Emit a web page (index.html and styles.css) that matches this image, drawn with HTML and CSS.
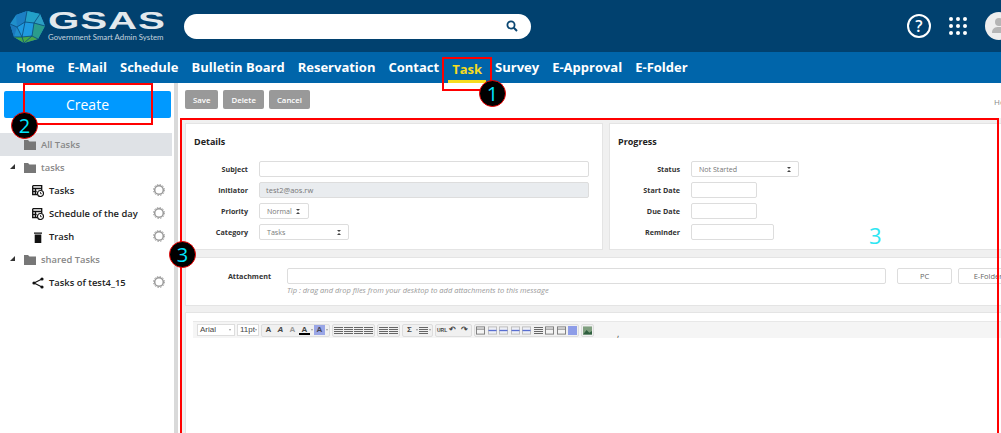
FILE: index.html
```html
<!DOCTYPE html>
<html lang="en">
<head>
    <meta charset="UTF-8">
    <meta name="viewport" content="width=device-width, initial-scale=1.0">
    <title>GSAS Task</title>
    <link rel="stylesheet" href="styles.css">
</head>
<body>
    <svg class="defs" width="0" height="0">
        <symbol id="folder" viewBox="0 0 12 11"><path d="M0 1h4l1.500 1.500H12V11H0z" fill="#777"/></symbol>
        <symbol id="gear" viewBox="0 0 12 12"><circle cx="6" cy="6" r="4.300" fill="none" stroke="#999" stroke-width="1.500"/><circle cx="6" cy="6" r="5.500" fill="none" stroke="#999" stroke-width="1" stroke-dasharray="1.400 1.480"/></symbol>
        <symbol id="calendar" viewBox="0 0 12 12"><path d="M.7.7h9v5M5 9.500H.7V.7M.7 3.500h9M3.500 3.500v6M.7 6.500h4" fill="none" stroke="#111" stroke-width="1.300"/><circle cx="8.500" cy="8.500" r="3" fill="#fff" stroke="#111" stroke-width="1.100"/><path d="M8.500 7v1.700h1.300" fill="none" stroke="#111" stroke-width=".8"/></symbol>
        <symbol id="align" viewBox="0 0 9 9"><path d="M0 1.500h9M0 3.500h9M0 5.500h9M0 7.500h9" stroke="#666" stroke-width="1"/></symbol>
        <symbol id="grid" viewBox="0 0 10 9"><rect x=".5" y=".5" width="9" height="8" fill="#f4f4f4" stroke="#777"/><path d="M.5 3h9" stroke="#777"/></symbol>
        <symbol id="blueline" viewBox="0 0 10 9"><rect x=".5" y=".5" width="9" height="8" fill="#eef0f6" stroke="#bbb"/><path d="M.5 4.500h9" stroke="#5a6fd0" stroke-width="1.500"/></symbol>
    </svg>

    <header class="topbar">
        <div class="logo">
            <svg class="logo-mark" width="35" height="34" viewBox="0 0 35 34">
                <path d="M17 1l13 3 5 12-7 13-14 4L4 27 0 14 6 5z" fill="#1f8fcb"/>
                <path d="M17 1l13 3-6 9-9-1z" fill="#22a0c8"/>
                <path d="M6 5l11-4-2 11-8 5z" fill="#1c7fc4"/>
                <path d="M30 4l5 12-11-3z" fill="#2c9fc4"/>
                <path d="M7 17l8-5 9 1-2 13-10 1z" fill="#1f9ae0"/>
                <path d="M4 27l8 0 2 6zM12 27l10-1-8 7z" fill="#45a84a"/>
                <path d="M22 26l6 3-14 4z" fill="#4aa64c"/>
                <path d="M24 13l11 3-7 13-6-3z" fill="#2a9c8c"/>
                <path d="M0 14l7 3-3 10z" fill="#1c78bc"/>
                <path d="M15 12l2-11M15 12l9 1 6-9M24 13l11 3M24 13l-2 13 6 3M22 26l-10 1 3-15-8 5-7-3M7 17l5 10-8 0M12 27l2 6M22 26l-8 7" fill="none" stroke="#0b4a78" stroke-width=".8"/>
            </svg>
            <div class="logo-text">
                <div class="logo-name">GSAS</div>
                <div class="logo-sub">Government Smart Admin System</div>
            </div>
        </div>
        <div class="search">
            <svg width="12" height="12" viewBox="0 0 12 12"><circle cx="5" cy="5" r="3.600" fill="none" stroke="#0a4672" stroke-width="1.800"/><path d="M7.800 7.800L11 11" stroke="#0a4672" stroke-width="2"/></svg>
        </div>
        <div class="top-icons">
            <div class="help">?</div>
            <svg class="apps" width="18" height="18" viewBox="0 0 18 18" fill="#fff">
                <circle cx="2" cy="2" r="2"/><circle cx="9" cy="2" r="2"/><circle cx="16" cy="2" r="2"/>
                <circle cx="2" cy="9" r="2"/><circle cx="9" cy="9" r="2"/><circle cx="16" cy="9" r="2"/>
                <circle cx="2" cy="16" r="2"/><circle cx="9" cy="16" r="2"/><circle cx="16" cy="16" r="2"/>
            </svg>
            <div class="avatar">
                <svg width="28" height="28" viewBox="0 0 28 28" fill="#b5b5b5"><circle cx="14" cy="10" r="4"/><path d="M7 21c0-5 3-6 7-6s7 1 7 6z"/></svg>
            </div>
        </div>
    </header>

    <nav class="menu">
        <a>Home</a>
        <a>E-Mail</a>
        <a>Schedule</a>
        <a>Bulletin Board</a>
        <a>Reservation</a>
        <a>Contact</a>
        <a class="active">Task</a>
        <a>Survey</a>
        <a>E-Approval</a>
        <a>E-Folder</a>
    </nav>

    <div class="page">
        <aside class="sidebar">
            <button class="create">Create</button>
            <ul class="tree">
                <li class="row selected group-row"><svg class="folder"><use href="#folder"/></svg>All Tasks</li>
                <li class="row group-row"><span class="caret"></span><svg class="folder"><use href="#folder"/></svg>tasks</li>
                <li class="row item"><svg class="item-icon"><use href="#calendar"/></svg>Tasks<svg class="gear"><use href="#gear"/></svg></li>
                <li class="row item"><svg class="item-icon"><use href="#calendar"/></svg>Schedule of the day<svg class="gear"><use href="#gear"/></svg></li>
                <li class="row item">
                    <svg class="item-icon" viewBox="0 0 12 12"><path d="M2 1.500h8v1.300H2zM2.700 3.500h6.600V12H2.700z" fill="#111"/></svg>Trash<svg class="gear"><use href="#gear"/></svg>
                </li>
                <li class="row group-row"><span class="caret"></span><svg class="folder"><use href="#folder"/></svg>shared Tasks</li>
                <li class="row item">
                    <svg class="item-icon" viewBox="0 0 12 12"><path d="M10 2L2 6l8 4" fill="none" stroke="#111" stroke-width="1.100"/><circle cx="10" cy="2" r="1.600" fill="#111"/><circle cx="2" cy="6" r="1.600" fill="#111"/><circle cx="10" cy="10" r="1.600" fill="#111"/></svg>Tasks of test4_15<svg class="gear"><use href="#gear"/></svg>
                </li>
            </ul>
        </aside>
        <div class="divider"></div>

        <main class="content">
            <div class="actions">
                <button class="act">Save</button>
                <button class="act">Delete</button>
                <button class="act">Cancel</button>
                <span class="crumb">Ho</span>
            </div>

            <div class="panels">
                <div class="cards">
                    <section class="card details">
                        <h3>Details</h3>
                        <div class="form">
                            <label>Subject</label>
                            <div class="field"></div>
                            <label>Initiator</label>
                            <div class="field readonly">test2@aos.rw</div>
                            <label>Priority</label>
                            <div class="field select w-priority">Normal<span class="updown"></span></div>
                            <label>Category</label>
                            <div class="field select w-category">Tasks<span class="updown"></span></div>
                        </div>
                    </section>
                    <section class="card progress">
                        <h3>Progress</h3>
                        <div class="form">
                            <label>Status</label>
                            <div class="field select w-status">Not Started<span class="updown"></span></div>
                            <label>Start Date</label>
                            <div class="field w-date"></div>
                            <label>Due Date</label>
                            <div class="field w-date"></div>
                            <label>Reminder</label>
                            <div class="field w-reminder"></div>
                        </div>
                    </section>
                </div>

                <section class="card attach">
                    <label>Attachment</label>
                    <div class="attach-main">
                        <div class="field"></div>
                        <p class="tip">Tip : drag and drop files from your desktop to add attachments to this message</p>
                    </div>
                    <div class="field file-btn pc">PC</div>
                    <div class="field file-btn efolder">E-Folder</div>
                </section>

                <section class="card editor">
                    <div class="tools">
                        <span class="tsel t-font">Arial<i></i></span>
                        <span class="tsel t-size">11pt<i></i></span>
                        <span class="tgroup">
                            <b class="tb">A</b><b class="tb it">A</b><b class="tb dim">A</b><b class="tb under">A</b><i class="drop"></i><b class="tb hl">A</b><i class="drop"></i>
                        </span>
                        <span class="tgroup">
                            <svg class="tb-ic"><use href="#align"/></svg><svg class="tb-ic"><use href="#align"/></svg><svg class="tb-ic"><use href="#align"/></svg><svg class="tb-ic"><use href="#align"/></svg>
                        </span>
                        <span class="tgroup">
                            <svg class="tb-ic"><use href="#align"/></svg><svg class="tb-ic"><use href="#align"/></svg>
                        </span>
                        <span class="tgroup">
                            <b class="tb">Σ</b><i class="drop"></i><svg class="tb-ic"><use href="#align"/></svg><i class="drop"></i>
                        </span>
                        <span class="tgroup">
                            <b class="tb url">URL</b><b class="tb">↶</b><b class="tb">↷</b>
                        </span>
                        <span class="tgroup wide">
                            <svg class="tb-ic"><use href="#grid"/></svg><svg class="tb-ic"><use href="#blueline"/></svg><svg class="tb-ic"><use href="#blueline"/></svg><svg class="tb-ic"><use href="#blueline"/></svg><svg class="tb-ic"><use href="#blueline"/></svg><svg class="tb-ic"><use href="#align"/></svg><svg class="tb-ic"><use href="#grid"/></svg><svg class="tb-ic"><use href="#grid"/></svg><span class="swatch"></span>
                        </span>
                        <span class="tgroup">
                            <svg class="tb-ic" viewBox="0 0 10 9"><rect width="10" height="9" fill="#7f9f7f"/><path d="M0 9l4-5 3 3 3-2v4z" fill="#2f5f3f"/></svg>
                        </span>
                    </div>
                    <div class="edit-area"></div>
                </section>
            </div>
        </main>
    </div>

    <!-- annotations drawn on top of the screenshot -->
    <div class="mark mark-task"></div>
    <div class="mark mark-create"></div>
    <div class="mark mark-main"></div>
    <div class="badge badge-1">1</div>
    <div class="badge badge-2">2</div>
    <div class="badge badge-3">3</div>
    <div class="three">3</div>
    <div class="tick">,</div>
</body>
</html>
```

FILE: styles.css
```css
/* Reset some default styles */
body, h3, p, ul, button {
    margin: 0;
    padding: 0;
    box-sizing: border-box;
}

html, body {
    height: 433px;
    overflow: hidden;
}

body {
    font-family: "Open Sans", sans-serif;
    background-color: #fff;
    position: relative;
    width: 1001px;
}

.defs {
    position: absolute;
}

/* top bar */
.topbar {
    height: 52px;
    background-color: #01416f;
    display: flex;
    align-items: center;
}

.logo {
    width: 184px;
    padding-left: 10px;
    display: flex;
    box-sizing: border-box;
}

.logo-mark {
    flex: none;
    margin-top: 1px;
}

.logo-text {
    margin-left: 3px;
}

.logo-name {
    font-family: "Liberation Sans", sans-serif;
    font-weight: bold;
    font-size: 24px;
    line-height: 23px;
    height: 23px;
    color: #e3e9ed;
    transform: scaleX(1.68);
    transform-origin: left center;
    letter-spacing: 0.5px;
}

.logo-sub {
    font-family: Lato, sans-serif;
    font-size: 7.800px;
    line-height: 10px;
    color: #c3d2dd;
    white-space: nowrap;
}

.search {
    width: 347px;
    height: 25px;
    background-color: #fff;
    border-radius: 13px;
    display: flex;
    align-items: center;
    justify-content: flex-end;
    padding-right: 13px;
    box-sizing: border-box;
}

.top-icons {
    margin-left: auto;
    display: flex;
    align-items: center;
    margin-right: -12px;
}

.help {
    width: 24px;
    height: 24px;
    border: 2px solid #fff;
    border-radius: 50%;
    box-sizing: border-box;
    color: #fff;
    font-size: 16px;
    font-weight: 600;
    line-height: 20px;
    text-align: center;
}

.apps {
    margin-left: 18px;
}

.avatar {
    width: 28px;
    height: 28px;
    background-color: #eee;
    border-radius: 50%;
    margin-left: 18px;
}

/* main menu */
.menu {
    height: 31px;
    background-color: #0065aa;
    display: flex;
    gap: 13px;
    padding-left: 16px;
    align-items: center;
}

.menu a {
    color: #fff;
    font-size: 13px;
    font-weight: 700;
    line-height: 33px;
    white-space: nowrap;
}

.menu a.active {
    color: #f7dc1e;
    box-shadow: inset 0 -3px 0 #f7dc1e;
    padding: 0 4px;
    margin: 0 -4px;
    line-height: 31px;
    padding-top: 2px;
    height: 31px;
    box-sizing: border-box;
}

/* page */
.page {
    display: flex;
    height: 350px;
}

.sidebar {
    width: 174px;
    flex: none;
    box-sizing: border-box;
    padding-top: 8px;
}

.create {
    display: block;
    margin-left: 4px;
    width: 167px;
    height: 27px;
    background-color: #0099ff;
    color: #fff;
    border: none;
    border-radius: 2px;
    font-family: "Open Sans", sans-serif;
    font-size: 14px;
}

.tree {
    list-style: none;
    margin-top: 15px;
    width: 172px;
}

.row {
    height: 23px;
    display: flex;
    align-items: center;
    font-size: 9.400px;
    position: relative;
    white-space: nowrap;
}

.group-row {
    padding-left: 24px;
    color: #888;
    font-weight: 600;
}

.selected {
    background-color: #dfe2e6;
}

.caret {
    position: absolute;
    left: 10px;
    top: 8px;
    width: 0;
    height: 0;
    border-left: 5px solid transparent;
    border-bottom: 5px solid #333;
}

.folder {
    width: 12px;
    height: 11px;
    margin-right: 5px;
}

.item {
    padding-left: 32px;
    color: #222;
    font-weight: 600;
}

.item-icon {
    width: 12px;
    height: 12px;
    margin-right: 5px;
    flex: none;
}

.gear {
    position: absolute;
    left: 153px;
    top: 5px;
    width: 12px;
    height: 12px;
}

.divider {
    width: 4px;
    flex: none;
    background-color: #d9d9d9;
}

.content {
    margin-left: 3px;
    flex: 1;
    min-width: 0;
    overflow: hidden;
}

/* Save / Delete / Cancel */
.actions {
    height: 35px;
    box-sizing: border-box;
    padding: 7px 0 0 4px;
    display: flex;
    gap: 5px;
    align-items: flex-start;
}

.act {
    height: 19px;
    padding: 0 8px;
    background-color: #999;
    color: #fff;
    border: none;
    border-radius: 2px;
    font-family: "Open Sans", sans-serif;
    font-size: 7.800px;
    font-weight: 600;
}

.crumb {
    margin-left: auto;
    margin-top: 6px;
    font-size: 8px;
    color: #888;
    width: 7px;
    overflow: hidden;
}

.panels {
    background-color: #f0f0f0;
    padding: 5px 0 0 4px;
    height: 315px;
}

.cards {
    display: flex;
    gap: 6px;
}

.card {
    background-color: #fff;
    border: 1px solid #e4e4e4;
    box-sizing: border-box;
}

.card h3 {
    font-size: 9px;
    font-weight: 700;
    color: #222;
    line-height: 14px;
    margin-top: -1px;
    margin-bottom: 12px;
}

.details {
    width: 418px;
    flex: none;
    padding: 12px 13px 9px 8px;
}

.progress {
    width: 500px;
    flex: none;
    padding: 12px 13px 9px 8px;
}

.form {
    display: grid;
    grid-template-columns: 54px 1fr;
    column-gap: 11px;
    row-gap: 5px;
    grid-auto-rows: 16px;
    align-items: center;
}

.progress .form {
    grid-template-columns: 62px 1fr;
}

label {
    font-size: 7.200px;
    font-weight: 700;
    color: #333;
    text-align: right;
    white-space: nowrap;
}

.field {
    height: 16px;
    border: 1px solid #ddd;
    border-radius: 2px;
    background-color: #fff;
    box-sizing: border-box;
    font-size: 7.500px;
    color: #777;
    line-height: 14px;
    padding-left: 6px;
}

.readonly {
    background-color: #e9ecef;
}

.select {
    display: flex;
    align-items: center;
    justify-content: space-between;
    padding: 0 7px;
    font-size: 7.100px;
}

.updown {
    width: 0;
    height: 1px;
    border-left: 2px solid transparent;
    border-right: 2px solid transparent;
    border-top: 2px solid #444;
    border-bottom: 2px solid #444;
    box-sizing: content-box;
}

.w-priority { width: 50px; padding-right: 8px; }
.w-category { width: 90px; }
.w-status { width: 108px; }
.w-date { width: 66px; }
.w-reminder { width: 83px; }

/* attachment row */
.attach {
    margin-top: 7px;
    height: 49px;
    width: 1000px;
    display: flex;
    align-items: flex-start;
    padding-top: 10px;
}

.attach label {
    width: 85px;
    line-height: 16px;
    flex: none;
}

.attach-main {
    margin-left: 16px;
    width: 599px;
    flex: none;
}

.tip {
    font-size: 7.500px;
    font-style: italic;
    color: #999;
    margin-top: 1px;
    line-height: 11px;
}

.file-btn {
    text-align: center;
    padding: 0;
    flex: none;
    color: #666;
}

.pc {
    width: 55px;
    margin-left: 11px;
}

.efolder {
    width: 60px;
    margin-left: 6px;
}

/* editor */
.editor {
    margin-top: 6px;
    width: 1000px;
    height: 140px;
    padding: 8px 0 0 7px;
}

.tools {
    height: 17px;
    background-color: #f5f5f5;
    display: flex;
    align-items: center;
    gap: 2px;
    padding-left: 4px;
    border-top: 1px solid #e8e8e8;
    box-sizing: border-box;
}

.tsel {
    height: 12px;
    background-color: #fff;
    border: 1px solid #ddd;
    box-sizing: border-box;
    font-family: "Liberation Sans", sans-serif;
    font-size: 8px;
    line-height: 10px;
    color: #444;
    padding-left: 2px;
    display: flex;
    align-items: center;
    justify-content: space-between;
    padding-right: 3px;
}

.tsel i, .drop {
    width: 0;
    height: 0;
    border-left: 1.500px solid transparent;
    border-right: 1.500px solid transparent;
    border-top: 2px solid #999;
    flex: none;
}

.t-font { width: 38px; }
.t-size { width: 22px; }

.tgroup {
    height: 13px;
    border: 1px solid #ddd;
    border-radius: 2px;
    box-sizing: border-box;
    background-color: #f0f0f0;
    display: flex;
    align-items: center;
    gap: 1px;
    padding: 0 1px;
}

.wide {
    gap: 2.500px;
}

.tb {
    font-family: "Liberation Sans", sans-serif;
    font-size: 8px;
    line-height: 10px;
    width: 11px;
    text-align: center;
    color: #444;
    flex: none;
}

.it { font-style: italic; }
.dim { color: #999; }
.under { box-shadow: inset 0 -2px 0 #000; }
.hl { background-color: #9aa6e6; color: #445; }
.url { font-size: 5px; width: 9px; }

.tb-ic {
    width: 9px;
    height: 9px;
    flex: none;
}

.swatch {
    width: 9px;
    height: 9px;
    background-color: #8e9de8;
    flex: none;
}

.edit-area {
    height: 100px;
    background-color: #fff;
}

/* red boxes and number badges */
.mark {
    position: absolute;
    border: 2px solid #f00;
    box-sizing: border-box;
}

.mark-task {
    left: 442px;
    top: 57px;
    width: 50px;
    height: 34px;
}

.mark-create {
    left: 23px;
    top: 83px;
    width: 130px;
    height: 42px;
}

.mark-main {
    left: 180px;
    top: 118px;
    width: 819px;
    height: 340px;
}

.badge {
    position: absolute;
    width: 27px;
    height: 27px;
    background-color: #000;
    border: 1px solid #e00;
    border-radius: 50%;
    box-sizing: border-box;
    color: #00e5ff;
    font-size: 20px;
    line-height: 25px;
    text-align: center;
}

.badge-1 { left: 479px; top: 80px; }
.badge-2 { left: 11px; top: 112px; }
.badge-3 { left: 169px; top: 241px; }

.three {
    position: absolute;
    left: 869px;
    top: 220px;
    font-size: 22px;
    line-height: 30px;
    color: #2ee6f2;
}

.tick {
    position: absolute;
    left: 617px;
    top: 328px;
    font-size: 9px;
    line-height: 12px;
    color: #444;
}
```
